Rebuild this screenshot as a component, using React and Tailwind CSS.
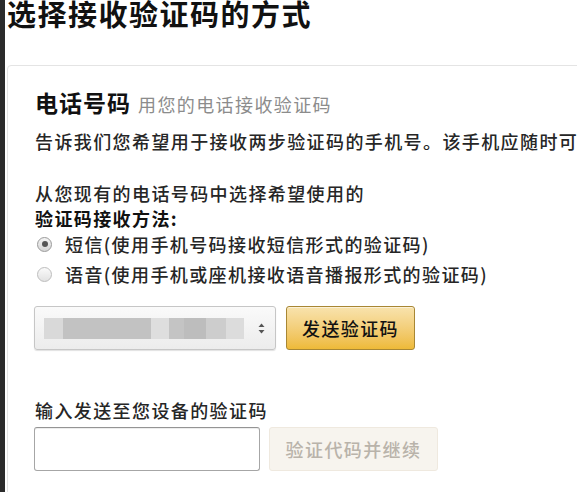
const maskBlocks = [
  { w: 19, c: 'bg-[#d9d9d9]' },
  { w: 88, c: 'bg-[#c2c2c2]' },
  { w: 18, c: 'bg-[#dedede]' },
  { w: 15, c: 'bg-[#c4c4c4]' },
  { w: 22, c: 'bg-[#bdbdbd]' },
  { w: 20, c: 'bg-[#cdcdcd]' },
  { w: 18, c: 'bg-[#dcdcdc]' },
];

const Radio = ({ checked, label }) => (
  <label className="flex items-center h-[28px]">
    <span
      className={`ml-[2px] w-[15px] h-[15px] rounded-full border flex items-center justify-center shrink-0 ${
        checked
          ? 'border-[#9a9a9a] bg-gradient-to-b from-[#f4f4f4] to-[#d6d6d6]'
          : 'border-[#bdbdbd] bg-gradient-to-b from-[#fafafa] to-[#e2e2e2]'
      }`}
    >
      {checked && <span className="w-[6px] h-[6px] rounded-full bg-[#555]" />}
    </span>
    <span className="ml-[13px] whitespace-nowrap">{label}</span>
  </label>
);

const App = () => {
  return (
    <div
      className="flex h-[492px] w-[577px] overflow-hidden bg-white text-[#262626] text-[18px] tracking-[1.4px] font-medium"
      style={{ fontFamily: '"Noto Sans CJK SC", "Noto Sans", sans-serif' }}
    >
      <div className="w-[5px] shrink-0 bg-[#2b2b2b]" />
      <div className="flex-1">
        <h1 className="ml-[2px] text-[29px] leading-[26px] font-bold tracking-[1.5px] text-[#111] whitespace-nowrap">
          选择接收验证码的方式
        </h1>

        <div className="mt-[39px] ml-[2px] w-[640px] h-[600px] border border-[#e4e4e4] rounded-[4px] pl-[27px] pt-[24px]">
          <div className="flex items-baseline leading-[24px] whitespace-nowrap">
            <span className="text-[23px] font-bold tracking-[1px] text-[#111]">电话号码</span>
            <span className="ml-[7px] text-[#8c8c8c] font-normal">用您的电话接收验证码</span>
          </div>
          <p className="mt-[13px] leading-[24px] whitespace-nowrap">
            告诉我们您希望用于接收两步验证码的手机号。该手机应随时可用。
          </p>

          <p className="mt-[28px] leading-[24px] whitespace-nowrap">从您现有的电话号码中选择希望使用的</p>
          <p className="mt-[1px] leading-[24px] font-bold text-[#111] whitespace-nowrap">验证码接收方法:</p>
          <div className="flex flex-col gap-[2px]">
            <Radio checked label="短信(使用手机号码接收短信形式的验证码)" />
            <Radio label="语音(使用手机或座机接收语音播报形式的验证码)" />
          </div>

          <div className="mt-[18px] -ml-[1px] flex gap-[10px]">
            <div className="w-[242px] h-[44px] rounded-[3px] border border-[#c6c6c6] bg-gradient-to-b from-[#fafafa] to-[#ececec] shadow-[0_1px_1px_rgba(0,0,0,0.12)] flex items-center pl-[9px] pr-[10px]">
              <div className="flex h-[21px]">
                {maskBlocks.map((b, i) => (
                  <span key={i} className={`h-full ${b.c}`} style={{ width: b.w }} />
                ))}
              </div>
              <svg className="ml-auto" width="7" height="11" viewBox="0 0 7 11">
                <path d="M3.5 0.5 L6.5 4 L0.5 4 Z" fill="#555" />
                <path d="M3.5 10.5 L6.5 7 L0.5 7 Z" fill="#555" />
              </svg>
            </div>
            <button className="w-[129px] h-[44px] rounded-[3px] border border-[#a88734] bg-gradient-to-b from-[#f8e3ad] to-[#eeba37] text-[#111] shadow-[inset_0_1px_0_rgba(255,255,255,0.5)]">
              发送验证码
            </button>
          </div>

          <p className="mt-[48px] leading-[24px] whitespace-nowrap">输入发送至您设备的验证码</p>
          <div className="mt-[5px] -ml-[1px] flex gap-[9px]">
            <input
              className="w-[226px] h-[44px] rounded-[3px] border border-[#a6a6a6] border-t-[#949494] shadow-[inset_0_1px_0_rgba(0,0,0,0.07)] outline-none px-2"
              type="text"
            />
            <button className="w-[169px] h-[44px] rounded-[3px] border border-[#efe9df] bg-[#f7f4ee] text-[#b9b3aa]">
              验证代码并继续
            </button>
          </div>
        </div>
      </div>
    </div>
  );
};

export default App;
